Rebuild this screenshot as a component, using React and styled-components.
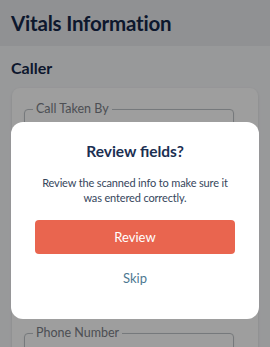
import React from "react";
import styled, { createGlobalStyle } from "styled-components";

const GlobalStyle = createGlobalStyle`
  html, body {
    margin: 0;
    padding: 0;
    background: #f6f7f9;
    font-family: "Lato", "Open Sans", sans-serif;
  }
`;

const Page = styled.div`
  width: 270px;
  height: 347px;
  overflow: hidden;
  position: relative;
`;

const Header = styled.header`
  height: 46px;
  background: #e8eaee;
  display: flex;
  align-items: center;
  padding: 0 11px;
  box-sizing: border-box;
`;

const Title = styled.h1`
  margin: 0;
  font-size: 20.5px;
  font-weight: 700;
  color: #15284a;
  letter-spacing: -0.2px;
`;

const Section = styled.section`
  padding: 11px 12px 0 12px;
`;

const SectionTitle = styled.h2`
  margin: 0 0 0 -1px;
  font-size: 16px;
  font-weight: 700;
  line-height: 22px;
  color: #15284a;
`;

const Card = styled.div`
  margin-top: 9px;
  background: #ffffff;
  border-radius: 8px;
  box-shadow: 0 1px 3px rgba(0, 0, 0, 0.12);
  padding: 14px 24px 12px 12px;
  display: flex;
  flex-direction: column;
  gap: 12px;
`;

const Field = styled.fieldset`
  margin: 0;
  padding: 0 8px;
  height: 44px;
  box-sizing: border-box;
  border: 1px solid #bfc3c8;
  border-radius: 4px;
  box-shadow: 0 1px 2px rgba(0, 0, 0, 0.08);
`;

const Legend = styled.legend`
  padding: 0 3px;
  font-size: 12.5px;
  line-height: 14px;
  color: #7c8088;
`;

const Overlay = styled.div`
  position: absolute;
  inset: 0;
  background: rgba(0, 0, 0, 0.38);
`;

const Modal = styled.div`
  position: absolute;
  top: 122px;
  left: 11px;
  right: 11px;
  height: 197px;
  background: #ffffff;
  border-radius: 12px;
  box-sizing: border-box;
  padding: 19px 24px 0;
  display: flex;
  flex-direction: column;
  align-items: stretch;
  text-align: center;
`;

const ModalTitle = styled.h3`
  margin: 0;
  font-size: 15.5px;
  line-height: 20px;
  font-weight: 700;
  color: #1b2f52;
`;

const ModalText = styled.p`
  margin: 14px 0 0;
  font-size: 11px;
  line-height: 15px;
  letter-spacing: -0.15px;
  color: #36465c;
`;

const PrimaryButton = styled.button`
  margin-top: 15px;
  height: 34px;
  border: none;
  border-radius: 4px;
  background: #e9654f;
  color: #ffffff;
  font-family: inherit;
  font-size: 13px;
`;

const LinkButton = styled.button`
  margin-top: 14px;
  border: none;
  background: none;
  color: #4d7891;
  font-family: inherit;
  font-size: 13px;
  line-height: 18px;
`;

const fields = ["Call Taken By", "Caller Name", "Relationship", "Address", "Phone Number"];

const App = () => {
  return (
    <Page>
      <GlobalStyle />
      <Header>
        <Title>Vitals Information</Title>
      </Header>
      <Section>
        <SectionTitle>Caller</SectionTitle>
        <Card>
          {fields.map((label) => (
            <Field key={label}>
              <Legend>{label}</Legend>
            </Field>
          ))}
        </Card>
      </Section>
      <Overlay />
      <Modal>
        <ModalTitle>Review fields?</ModalTitle>
        <ModalText>
          Review the scanned info to make sure it was entered correctly.
        </ModalText>
        <PrimaryButton>Review</PrimaryButton>
        <LinkButton>Skip</LinkButton>
      </Modal>
    </Page>
  );
};

export default App;
